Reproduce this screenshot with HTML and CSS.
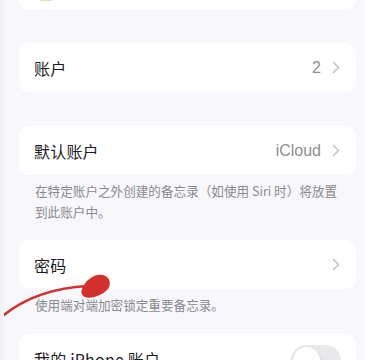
FILE: index.html
```html
<!DOCTYPE html>
<html lang="zh-CN">
<head>
<meta charset="utf-8">
<link rel="stylesheet" href="styles.css">
</head>
<body>
<div class="page">
  <div class="card card-top"><span class="green-tip"></span></div>

  <div class="card row gap-lg">
    <span class="label">账户</span>
    <span class="trail"><span class="value">2</span><svg class="chev" viewBox="0 0 8 13" width="8" height="13"><path d="M1.5 1.5 L6.5 6.5 L1.5 11.5" fill="none" stroke="#c4c4c7" stroke-width="1.6" stroke-linecap="round" stroke-linejoin="round"/></svg></span>
  </div>

  <div class="card row gap-lg">
    <span class="label">默认账户</span>
    <span class="trail"><span class="value">iCloud</span><svg class="chev" viewBox="0 0 8 13" width="8" height="13"><path d="M1.5 1.5 L6.5 6.5 L1.5 11.5" fill="none" stroke="#c4c4c7" stroke-width="1.6" stroke-linecap="round" stroke-linejoin="round"/></svg></span>
  </div>
  <p class="note">在特定账户之外创建的备忘录（如使用 Siri 时）将放置到此账户中。</p>

  <div class="card row gap-sm">
    <span class="label">密码</span>
    <span class="trail"><svg class="chev" viewBox="0 0 8 13" width="8" height="13"><path d="M1.5 1.5 L6.5 6.5 L1.5 11.5" fill="none" stroke="#c4c4c7" stroke-width="1.6" stroke-linecap="round" stroke-linejoin="round"/></svg></span>
  </div>
  <p class="note">使用端对端加密锁定重要备忘录。</p>

  <div class="card row gap-md">
    <span class="label">我的 iPhone 账户</span>
    <span class="toggle"><span class="knob"></span></span>
  </div>
</div>

<svg class="arrow" viewBox="0 0 120 330" width="120" height="330">
  <path d="M-2 320 C 20 300, 50 288, 88 286" fill="none" stroke="#d3312d" stroke-width="2.6" stroke-linecap="round"/>
  <path d="M82 289 C 85 280, 95 273, 103 275 C 111 277, 112 286, 106 291 C 100 296, 91 299, 85 297 C 81 295, 81 292, 82 289 Z" fill="#d3312d"/>
</svg>
</body>
</html>
```

FILE: styles.css
```css
* { box-sizing: border-box; }
html, body {
  margin: 0;
  padding: 0;
  background: #f8f7fc;
  font-family: "Noto Sans CJK SC", "Noto Sans", sans-serif;
  overflow: hidden;
}
body {
  width: 365px;
  height: 360px;
  position: relative;
  border-left: 4px solid #f2f2f9;
}
.page {
  padding: 0 9px 0 15px;
}
.card {
  background: #ffffff;
  border-radius: 10px;
}
.card-top {
  height: 9px;
  border-radius: 0 0 10px 10px;
  position: relative;
}
.green-tip {
  position: absolute;
  left: 21px;
  top: 0;
  width: 12px;
  height: 1px;
  background: #cfe9b8;
}
.row {
  height: 49px;
  display: flex;
  align-items: center;
  justify-content: space-between;
  padding: 0 16px 0 15px;
}
.gap-lg { margin-top: 34px; }
.gap-sm { margin-top: 18px; }
.gap-md { margin-top: 19px; height: 50px; }
.label {
  font-size: 16px;
  color: #1c1c1e;
  letter-spacing: 0.2px;
}
.trail {
  display: flex;
  align-items: center;
  gap: 11px;
}
.value {
  font-size: 16px;
  color: #8e8e93;
  font-family: "Liberation Sans", "Noto Sans CJK SC", sans-serif;
}
.chev { display: block; }
.note {
  margin: 0;
  padding: 5px 16px 0 16px;
  font-size: 12.6px;
  line-height: 21px;
  color: #8a8a8e;
}
.toggle {
  width: 50px;
  height: 31px;
  border-radius: 16px;
  background: #e9e9eb;
  position: relative;
  align-self: flex-start;
  margin-top: 11px;
  margin-right: -1px;
}
.knob {
  position: absolute;
  left: 2px;
  top: 2px;
  width: 27px;
  height: 27px;
  border-radius: 50%;
  background: #fff;
  box-shadow: 0 2px 4px rgba(0,0,0,0.15);
}
.arrow {
  position: absolute;
  left: -4px;
  top: 0;
  pointer-events: none;
}
```
